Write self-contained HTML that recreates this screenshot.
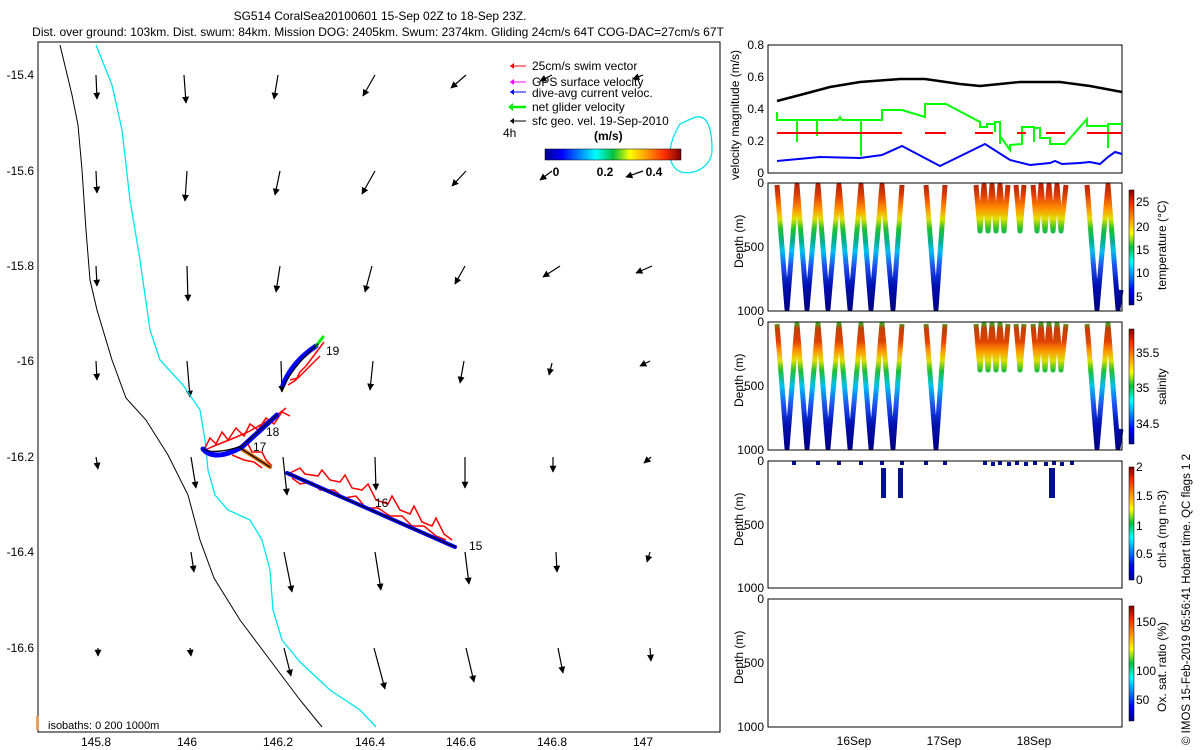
<!DOCTYPE html>
<html><head><meta charset="utf-8"><style>
html,body{margin:0;padding:0;background:#fff;}
svg{display:block;font-family:"Liberation Sans",sans-serif;}
</style></head><body>
<svg width="1200" height="750" viewBox="0 0 1200 750" xmlns="http://www.w3.org/2000/svg">
<defs>
<linearGradient id="jet" x1="0" x2="1" y1="0" y2="0">
<stop offset="0" stop-color="#00008f"/><stop offset="0.125" stop-color="#0000ff"/><stop offset="0.375" stop-color="#00ffff"/><stop offset="0.5" stop-color="#00c040"/><stop offset="0.625" stop-color="#ffff00"/><stop offset="0.875" stop-color="#ff3000"/><stop offset="1" stop-color="#800000"/></linearGradient>
<linearGradient id="jetv" x1="0" x2="0" y1="1" y2="0">
<stop offset="0" stop-color="#00008f"/><stop offset="0.125" stop-color="#0000ff"/><stop offset="0.375" stop-color="#00ffff"/><stop offset="0.5" stop-color="#00c040"/><stop offset="0.625" stop-color="#ffff00"/><stop offset="0.875" stop-color="#ff3000"/><stop offset="1" stop-color="#800000"/></linearGradient>
<linearGradient id="tg" gradientUnits="userSpaceOnUse" x1="0" y1="183" x2="0" y2="311">
<stop offset="0" stop-color="#b02000"/><stop offset="0.1" stop-color="#e04000"/><stop offset="0.2" stop-color="#ff9000"/><stop offset="0.28" stop-color="#e0e000"/><stop offset="0.36" stop-color="#20c030"/><stop offset="0.46" stop-color="#00b090"/><stop offset="0.53" stop-color="#00c0f0"/><stop offset="0.65" stop-color="#2050f0"/><stop offset="0.8" stop-color="#0010b0"/><stop offset="1" stop-color="#000080"/></linearGradient>
<linearGradient id="sg" gradientUnits="userSpaceOnUse" x1="0" y1="183" x2="0" y2="311">
<stop offset="0" stop-color="#20c030"/><stop offset="0.05" stop-color="#c04000"/><stop offset="0.15" stop-color="#e04000"/><stop offset="0.22" stop-color="#ff9000"/><stop offset="0.3" stop-color="#e0e000"/><stop offset="0.38" stop-color="#20c030"/><stop offset="0.5" stop-color="#00c0f0"/><stop offset="0.65" stop-color="#2050f0"/><stop offset="0.8" stop-color="#0010b0"/><stop offset="1" stop-color="#000080"/></linearGradient>
<marker id="ah" viewBox="0 0 10 10" refX="9" refY="5" markerWidth="7" markerHeight="7" markerUnits="userSpaceOnUse" orient="auto"><path d="M0,0 L10,5 L0,10 Z" fill="#000"/></marker>
</defs>
<g font-size="12" fill="#000">
<text x="380" y="20" text-anchor="middle">SG514 CoralSea20100601 15-Sep 02Z to 18-Sep 23Z.</text>
<text x="378" y="36" text-anchor="middle">Dist. over ground: 103km. Dist. swum: 84km. Mission DOG: 2405km. Swum: 2374km. Gliding 24cm/s 64T COG-DAC=27cm/s 67T</text>
</g>
<!-- arrows -->
<g stroke="#000" stroke-width="1.2" marker-end="url(#ah)">
<line x1="96" y1="75" x2="97" y2="99"/><line x1="184" y1="75" x2="186" y2="103"/><line x1="278" y1="75" x2="274" y2="99"/><line x1="375" y1="75" x2="363" y2="96"/><line x1="466" y1="75" x2="451" y2="88"/><line x1="552" y1="75" x2="540" y2="81"/><line x1="643" y1="75" x2="633" y2="79"/>
<line x1="96" y1="171" x2="97" y2="193"/><line x1="187" y1="171" x2="185" y2="201"/><line x1="280" y1="171" x2="275" y2="195"/><line x1="375" y1="171" x2="362" y2="194"/><line x1="466" y1="171" x2="452" y2="186"/><line x1="552" y1="171" x2="540" y2="180"/><line x1="643" y1="171" x2="626" y2="177"/>
<line x1="96" y1="266" x2="97" y2="286"/><line x1="187" y1="266" x2="188" y2="301"/><line x1="280" y1="266" x2="276" y2="292"/><line x1="372" y1="266" x2="365" y2="292"/><line x1="465" y1="266" x2="455" y2="284"/><line x1="560" y1="266" x2="543" y2="277"/><line x1="652" y1="266" x2="636" y2="273"/>
<line x1="96" y1="361" x2="97" y2="380"/><line x1="187" y1="361" x2="190" y2="397"/><line x1="281" y1="361" x2="282" y2="392"/><line x1="373" y1="361" x2="370" y2="390"/><line x1="464" y1="361" x2="460" y2="383"/><line x1="552" y1="363" x2="549" y2="375"/><line x1="650" y1="361" x2="640" y2="366"/>
<line x1="96" y1="457" x2="98" y2="469"/><line x1="191" y1="457" x2="196" y2="488"/><line x1="283" y1="457" x2="287" y2="495"/><line x1="375" y1="457" x2="376" y2="490"/><line x1="465" y1="457" x2="465" y2="488"/><line x1="553" y1="457" x2="553" y2="472"/><line x1="651" y1="457" x2="644" y2="463"/>
<line x1="191" y1="552" x2="194" y2="572"/><line x1="284" y1="552" x2="292" y2="592"/><line x1="375" y1="552" x2="381" y2="590"/><line x1="465" y1="552" x2="469" y2="584"/><line x1="556" y1="552" x2="557" y2="572"/><line x1="650" y1="552" x2="647" y2="562"/>
<line x1="98" y1="648" x2="98" y2="656"/><line x1="190" y1="648" x2="191" y2="656"/><line x1="284" y1="648" x2="291" y2="676"/><line x1="374" y1="648" x2="385" y2="689"/><line x1="466" y1="648" x2="474" y2="682"/><line x1="558" y1="648" x2="563" y2="673"/><line x1="650" y1="648" x2="651" y2="661"/>
</g>
<polyline fill="none" stroke="#000" stroke-width="1" points="60,45 72,95 78,125 82,170 86,230 90,280 97,310 112,360 126,398 146,420 168,455 188,495 200,540 214,578 240,620 270,660 300,700 322,727"/>
<polyline fill="none" stroke="#00e5ee" stroke-width="1.3" points="96,45 112,85 122,130 130,200 140,260 150,330 160,360 183,385 200,410 205,440 208,470 215,495 228,510 250,520 262,540 270,570 273,610 282,640 300,662 330,690 360,710 376,727"/>
<path d="M693,118 C708,112 712,130 712,150 C712,168 690,178 677,170 C665,160 670,140 680,124 Z" fill="none" stroke="#00e5ee" stroke-width="1.3"/>
<rect x="38" y="42" width="682" height="690" fill="none" stroke="#000"/>
<g font-size="12" text-anchor="middle">
<text x="96" y="746">145.8</text><text x="187" y="746">146</text><text x="278" y="746">146.2</text><text x="370" y="746">146.4</text><text x="461" y="746">146.6</text><text x="552" y="746">146.8</text><text x="643" y="746">147</text>
</g>
<g font-size="12" text-anchor="end">
<text x="34" y="79">-15.4</text><text x="34" y="175">-15.6</text><text x="34" y="270">-15.8</text><text x="34" y="365">-16</text><text x="34" y="461">-16.2</text><text x="34" y="556">-16.4</text><text x="34" y="652">-16.6</text>
</g>
<text x="48" y="729" font-size="11">isobaths: 0   200  1000m</text>
<rect x="36" y="716" width="3" height="14" fill="#e8a060"/>
<!-- tracks -->
<g fill="none" stroke="#f00" stroke-width="1.5">
<polyline points="290,473 300,468 305,474 318,476 322,470 330,480 340,482 345,475 352,488 362,490 368,484 376,500 388,504 392,496 400,510 410,514 414,506 422,522 432,526 436,518 444,534 452,540"/>
<polyline points="292,478 300,484 312,482 320,490 334,490 344,498 356,496 366,508 378,508 390,516 402,516 412,526 424,526 436,536 446,540"/>
<polyline points="240,449 248,444 252,452 262,452 266,460 272,466"/>
<polyline points="232,455 244,460 254,462 262,468"/>
<polyline points="205,448 210,438 216,444 222,432 228,440 236,428 244,436 250,424 258,430 266,418 274,424 282,412 290,416"/>
<polyline points="205,450 214,446 224,442 234,438 248,432 262,424 276,416 286,408"/>
<polyline points="288,385 296,380 300,372 306,366 312,358 318,350 324,342"/>
<polyline points="290,380 298,378 306,370 312,364 320,356"/>
</g>
<g fill="none" stroke-linecap="round">
<line x1="287" y1="473" x2="455" y2="547" stroke="#00f" stroke-width="4"/>
<line x1="240" y1="448" x2="270" y2="467" stroke="#e07000" stroke-width="4"/>
<path d="M203,449 Q215,462 242,447 L277,415" stroke="#00f" stroke-width="5"/>
<path d="M283,385 Q292,362 316,346" stroke="#00f" stroke-width="5"/>
<line x1="316" y1="346" x2="323" y2="337" stroke="#0e0" stroke-width="3"/>
<line x1="287" y1="473" x2="455" y2="547" stroke="#000" stroke-width="1.2"/>
<line x1="240" y1="448" x2="270" y2="467" stroke="#000" stroke-width="1.2"/>
<path d="M203,449 Q215,455 242,446 L277,415" stroke="#000" stroke-width="1.2"/>
<path d="M283,387 Q295,364 318,344" stroke="#000" stroke-width="1.2"/>
</g>
<g font-size="12"><text x="326" y="355">19</text><text x="266" y="436">18</text><text x="253" y="451">17</text><text x="375" y="507">16</text><text x="469" y="550">15</text></g>
<!-- legend -->
<g font-size="12">
<line x1="510" y1="66" x2="526" y2="66" stroke="#f00"/><path d="M510,66 l4,-3 v6z" fill="#f00"/><text x="532" y="70">25cm/s swim vector</text>
<line x1="510" y1="82" x2="526" y2="82" stroke="#f0f"/><path d="M510,82 l4,-3 v6z" fill="#f0f"/><text x="532" y="86">GPS surface velocity</text>
<line x1="510" y1="92" x2="526" y2="92" stroke="#00f"/><path d="M510,92 l4,-3 v6z" fill="#00f"/><text x="532" y="97">dive-avg current veloc.</text>
<line x1="510" y1="107" x2="526" y2="107" stroke="#0e0" stroke-width="2.5"/><path d="M508,107 l5,-4 v8z" fill="#0e0"/><text x="532" y="111">net glider velocity</text>
<line x1="510" y1="121" x2="526" y2="121" stroke="#000"/><path d="M510,121 l4,-3 v6z" fill="#000"/><text x="532" y="125">sfc geo. vel. 19-Sep-2010</text>
<text x="503" y="137">4h</text>
<text x="594" y="140" font-weight="bold" font-size="12">(m/s)</text>
<rect x="545" y="149" width="136" height="11" fill="url(#jet)" stroke="#000" stroke-width="0.5"/>
<g font-weight="bold"><text x="556" y="176" text-anchor="middle">0</text><text x="605" y="176" text-anchor="middle">0.2</text><text x="654" y="176" text-anchor="middle">0.4</text></g>
</g>
<!-- profiles -->
<g fill="none" stroke-width="5" stroke-linejoin="round">
<path stroke="url(#tg)" d="M777,185L787,309L797,185L807,309L818,185L828,309L839,185L850,309L861,185L871,309L882,185L893,309L902,185 M926,185L936,309L945,185 M1087,185L1097,309L1108,185L1118,309L1121,290 M976,185L980,231L984,185L988,231L992,185L996,231L1000,185L1004,231L1008,185 M1016,185L1020,231L1024,185 M1033,185L1037,231L1041,185L1045,231L1049,185L1053,231L1057,185L1061,231L1066,185"/>
<path transform="translate(0,139)" stroke="url(#sg)" d="M777,185L787,309L797,185L807,309L818,185L828,309L839,185L850,309L861,185L871,309L882,185L893,309L902,185 M926,185L936,309L945,185 M1087,185L1097,309L1108,185L1118,309L1121,290 M976,185L980,231L984,185L988,231L992,185L996,231L1000,185L1004,231L1008,185 M1016,185L1020,231L1024,185 M1033,185L1037,231L1041,185L1045,231L1049,185L1053,231L1057,185L1061,231L1066,185"/>
</g>
<g fill="#00108f">
<rect x="792" y="461" width="4" height="4"/><rect x="816" y="461" width="4" height="4"/><rect x="837" y="461" width="4" height="4"/><rect x="859" y="461" width="4" height="4"/><rect x="880" y="461" width="4" height="4"/><rect x="900" y="461" width="4" height="4"/><rect x="924" y="461" width="4" height="4"/><rect x="943" y="461" width="4" height="4"/><rect x="983" y="461" width="4" height="4"/><rect x="991" y="462" width="4" height="4"/><rect x="998" y="461" width="4" height="4"/><rect x="1007" y="462" width="4" height="4"/><rect x="1015" y="461" width="4" height="4"/><rect x="1024" y="462" width="4" height="4"/><rect x="1033" y="461" width="4" height="4"/><rect x="1044" y="462" width="4" height="4"/><rect x="1052" y="461" width="4" height="4"/><rect x="1060" y="462" width="4" height="4"/><rect x="1070" y="461" width="4" height="4"/>
<rect x="881" y="468" width="5" height="30"/><rect x="898" y="468" width="5" height="30"/><rect x="1049" y="468" width="6" height="30"/>
</g>
<g font-size="12">
<rect x="768" y="45" width="354" height="128" fill="none" stroke="#000"/>
<g text-anchor="end"><text x="764" y="49">0.8</text><text x="764" y="81">0.6</text><text x="764" y="113">0.4</text><text x="764" y="145">0.2</text><text x="764" y="177">0</text></g>
<text transform="translate(739,180) rotate(-90)" font-size="12">velocity magnitude (m/s)</text>
<polyline fill="none" stroke="#000" stroke-width="2.5" points="777,101 800,95 830,87 860,82 900,79 925,79 960,84 980,86 1000,84 1020,82 1060,82 1090,86 1122,92"/>
<polyline fill="none" stroke="#0f0" stroke-width="2" points="777,112 777,120 797,120 797,142 797,120 817,120 817,136 817,120 838,120 840,117 842,120 861,120 861,156 861,120 882,120 882,110 902,110 925,117 925,104 946,104 980,122 980,127 987,127 987,124 995,124 995,132 995,122 1000,122 1000,144 1000,136 1010,150 1010,145 1022,144 1022,127 1034,127 1034,142 1034,128 1040,128 1040,138 1050,138 1050,144 1065,144 1087,119 1087,126 1108,126 1108,148 1108,124 1122,124"/>
<g stroke="#f00" stroke-width="2"><line x1="777" y1="133" x2="902" y2="133"/><line x1="925" y1="133" x2="946" y2="133"/><line x1="975" y1="133" x2="993" y2="133"/><line x1="1017" y1="133" x2="1026" y2="133"/><line x1="1046" y1="133" x2="1065" y2="133"/><line x1="1087" y1="133" x2="1122" y2="133"/></g>
<polyline fill="none" stroke="#00f" stroke-width="2" points="777,161 820,157 860,158 882,155 902,146 940,166 985,144 1010,160 1030,165 1040,164 1050,163 1055,161 1062,164 1080,163 1090,162 1100,164 1108,157 1115,152 1122,154"/>
<rect x="768" y="183" width="354" height="128" fill="none" stroke="#000"/>
<rect x="768" y="322" width="354" height="128" fill="none" stroke="#000"/>
<rect x="768" y="461" width="354" height="127" fill="none" stroke="#000"/>
<rect x="768" y="599" width="354" height="128" fill="none" stroke="#000"/>
<g text-anchor="end">
<text x="764" y="187">0</text><text x="764" y="251">500</text><text x="764" y="315">1000</text>
<text x="764" y="326">0</text><text x="764" y="390">500</text><text x="764" y="454">1000</text>
<text x="764" y="465">0</text><text x="764" y="529">500</text><text x="764" y="592">1000</text>
<text x="764" y="603">0</text><text x="764" y="667">500</text><text x="764" y="731">1000</text>
</g>
<text transform="translate(743,268) rotate(-90)">Depth (m)</text>
<text transform="translate(743,407) rotate(-90)">Depth (m)</text>
<text transform="translate(743,546) rotate(-90)">Depth (m)</text>
<text transform="translate(743,684) rotate(-90)">Depth (m)</text>
<g text-anchor="middle"><text x="854" y="745">16Sep</text><text x="944" y="745">17Sep</text><text x="1034" y="745">18Sep</text></g>
<rect x="1129" y="190" width="5" height="115" fill="url(#jetv)" stroke="#000" stroke-width="0.5"/>
<rect x="1129" y="329" width="5" height="115" fill="url(#jetv)" stroke="#000" stroke-width="0.5"/>
<rect x="1129" y="467" width="5" height="113" fill="url(#jetv)" stroke="#000" stroke-width="0.5"/>
<rect x="1129" y="606" width="5" height="115" fill="url(#jetv)" stroke="#000" stroke-width="0.5"/>
<text x="1136" y="206">25</text><text x="1136" y="231">20</text><text x="1136" y="254">15</text><text x="1136" y="277">10</text><text x="1136" y="301">5</text>
<text x="1136" y="357">35.5</text><text x="1136" y="392">35</text><text x="1136" y="428">34.5</text>
<text x="1136" y="471">2</text><text x="1136" y="500">1.5</text><text x="1136" y="530">1</text><text x="1136" y="558">0.5</text><text x="1136" y="584">0</text>
<text x="1136" y="626">150</text><text x="1136" y="675">100</text><text x="1136" y="704">50</text>
<text transform="translate(1166,290) rotate(-90)">temperature (°C)</text>
<text transform="translate(1166,405) rotate(-90)">salinity</text>
<text transform="translate(1166,568) rotate(-90)">chl-a (mg m-3)</text>
<text transform="translate(1166,712) rotate(-90)">Ox. sat. ratio (%)</text>
<text transform="translate(1190,745) rotate(-90)" font-size="11.5">© IMOS 15-Feb-2019 05:56:41 Hobart time. QC flags 1  2</text>
</g>
</svg>
</body></html>
